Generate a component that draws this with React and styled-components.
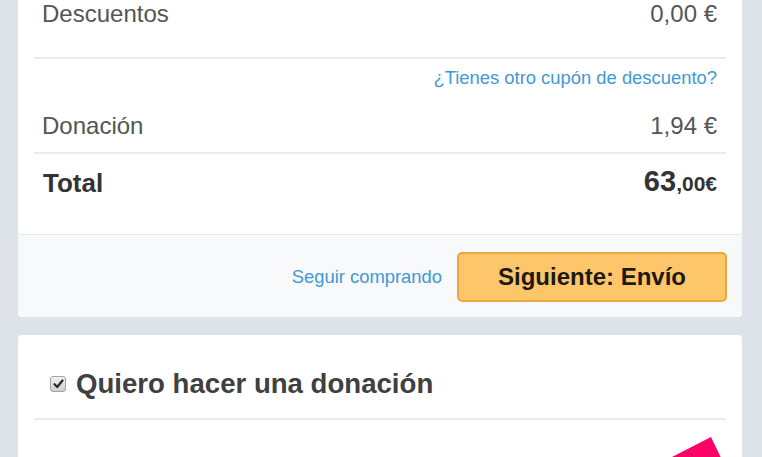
import React from 'react'
import styled, { createGlobalStyle } from 'styled-components'

const GlobalStyle = createGlobalStyle`
    html, body {
        margin: 0;
        padding: 0;
        background: #dee3e9;
        font-family: "Liberation Sans", Arial, sans-serif;
        overflow: hidden;
    }
`

const Page = styled.div`
    position: relative;
    width: 762px;
    height: 457px;
    padding: 0 20px 0 18px;
    box-sizing: border-box;
    overflow: hidden;
`

const Card = styled.div`
    background: #fff;
    border-radius: 4px;
    overflow: hidden;
    margin-top: ${p => p.$offset || 0}px;
    min-height: ${p => p.$minHeight || 0}px;
`

const Summary = styled.div`
    padding: 20px 16px 0;
`

const Row = styled.div`
    display: flex;
    justify-content: space-between;
    align-items: center;
    padding: ${p => p.$pad || '0 9px 0 8px'};
    border-bottom: ${p => (p.$divider ? '2px solid #ececec' : 'none')};
    font-size: 24px;
    line-height: 28px;
    color: #555;
`

const LinkRow = styled.div`
    display: flex;
    justify-content: flex-end;
    padding: 8px 9px 0 8px;
`

const Link = styled.a`
    font-size: 18.4px;
    line-height: 22px;
    color: #3f9ad5;
    text-decoration: none;
    cursor: pointer;
`

const TotalLabel = styled.span`
    font-size: 26px;
    line-height: 32px;
    font-weight: 700;
    color: #333;
`

const TotalAmount = styled.span`
    font-weight: 700;
    color: #333;
    line-height: 32px;
    font-size: 29px;
    small {
        font-size: 21px;
    }
`

const Footer = styled.div`
    display: flex;
    justify-content: flex-end;
    align-items: center;
    gap: 15px;
    padding: 17px 15px 15px;
    background: #f7f9fb;
    border-top: 1px solid #e6e9ec;
`

const Button = styled.button`
    width: 270px;
    height: 50px;
    box-sizing: border-box;
    background: #fec66a;
    border: 2px solid #eda73f;
    border-radius: 5px;
    font-family: "Liberation Sans", Arial, sans-serif;
    font-size: 24px;
    font-weight: 700;
    color: #1e1a10;
    cursor: pointer;
`

const Header = styled.div`
    margin: 0 16px;
    padding: 32px 0 17px;
    border-bottom: 2px solid #ececec;
    display: flex;
    align-items: center;
    gap: 10px;
`

const Check = styled.span`
    width: 16px;
    height: 16px;
    margin-left: 16px;
    box-sizing: border-box;
    border: 1px solid #a4a4a4;
    border-radius: 3px;
    background: linear-gradient(#f0f0f0, #cfcfcf);
    display: flex;
    align-items: center;
    justify-content: center;
`

const Title = styled.h2`
    margin: 0;
    font-size: 27.6px;
    line-height: 34px;
    font-weight: 700;
    color: #404040;
`

const Ribbon = styled.svg`
    position: absolute;
    left: 660px;
    top: 430px;
`

function App() {
    return (
        <Page>
            <GlobalStyle />
            <Card $offset={-20}>
                <Summary>
                    <Row $divider $pad="0 9px 29px 8px">
                        <span>Descuentos</span>
                        <span>0,00 €</span>
                    </Row>
                    <LinkRow>
                        <Link>¿Tienes otro cupón de descuento?</Link>
                    </LinkRow>
                    <Row $divider $pad="23px 9px 12px 8px">
                        <span>Donación</span>
                        <span>1,94 €</span>
                    </Row>
                    <Row $pad="11px 9px 34px 9px">
                        <TotalLabel>Total</TotalLabel>
                        <TotalAmount>63<small>,00€</small></TotalAmount>
                    </Row>
                </Summary>
                <Footer>
                    <Link>Seguir comprando</Link>
                    <Button>Siguiente: Envío</Button>
                </Footer>
            </Card>
            <Card $offset={18} $minHeight={200}>
                <Header>
                    <Check>
                        <svg width="11" height="10" viewBox="0 0 11 10">
                            <path d="M1.5 5.2 L4.2 8 L9.5 1.5" fill="none" stroke="#2a2a2a" strokeWidth="2.2" strokeLinecap="round" strokeLinejoin="round" />
                        </svg>
                    </Check>
                    <Title>Quiero hacer una donación</Title>
                </Header>
            </Card>
            <Ribbon width="80" height="30" viewBox="0 0 80 30">
                <polygon points="12,27 51,7 63,32 20,40" fill="#fe0167" />
            </Ribbon>
        </Page>
    )
}

export default App
